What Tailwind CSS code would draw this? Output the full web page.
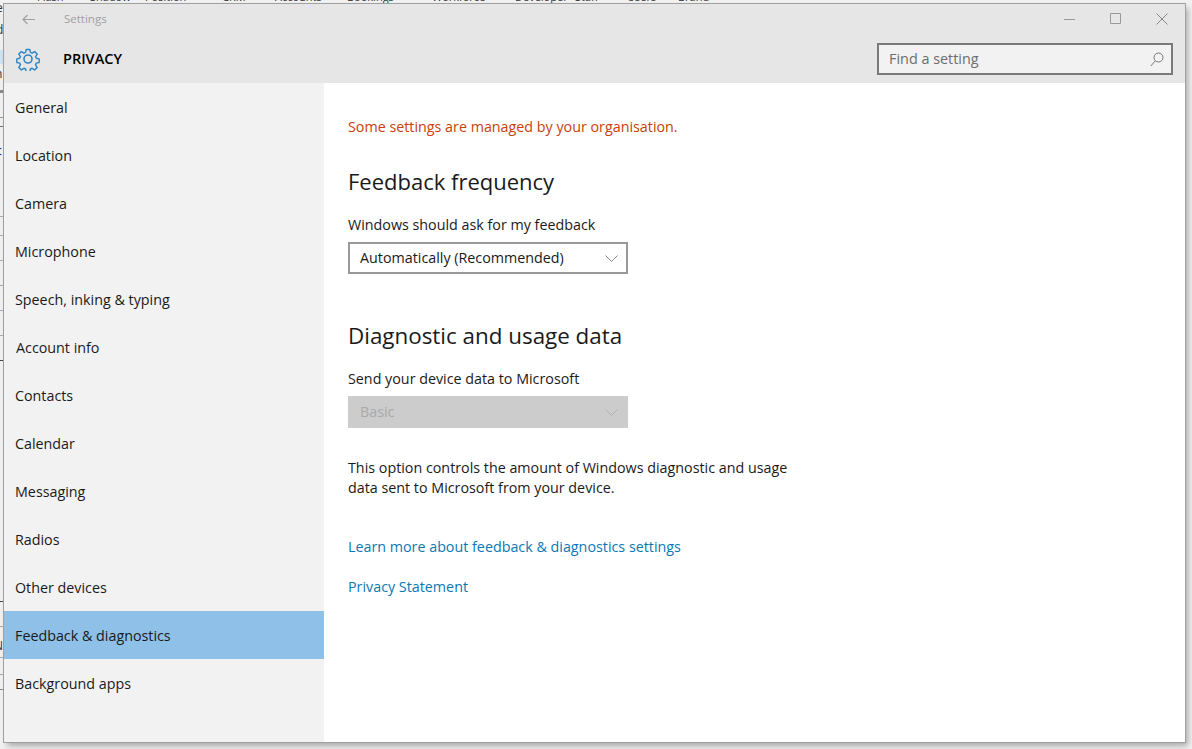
<!doctype html>
<html>
<head>
<meta charset="utf-8">
<title>Settings</title>
<script src="https://cdn.jsdelivr.net/npm/@tailwindcss/browser@4"></script>
</head>
<body class="relative w-[1192px] h-[749px] overflow-hidden bg-[#f1f1f1] font-['Open_Sans','Noto_Sans',sans-serif]">
  <!-- desktop behind the window -->
  <div class="absolute left-0 top-[-11px] w-full flex text-[11px] text-[#333] whitespace-nowrap">
    <span class="ml-[37px] w-[53px]">Flash</span><span class="w-[55px]">Shadow</span><span class="w-[77px]">Position</span><span class="w-[53px]">CRM</span><span class="w-[72px]">Accounts</span><span class="w-[85px]">Bookings</span><span class="w-[83px]">Workforce</span><span class="w-[60px]">Developer</span><span class="w-[52px]">Staff</span><span class="w-[51px]">Users</span><span>Brand</span>
  </div>
  <div class="absolute left-0 top-0 w-[3px] h-[749px] overflow-hidden flex flex-col text-[12px] leading-[14px] text-[#333]">
    <span class="mt-[1px] -ml-[4px]">e</span>
    <span class="mt-[8px] -ml-[4px]">d</span>
    <div class="mt-[13px] h-[14px] bg-[#cfe4f2]"></div>
    <span class="mt-[3px] -ml-[5px]">n</span>
    <div class="mt-[9px] h-[3px] bg-[#8a8a8a]"></div>
    <div class="mt-[24px] h-px bg-[#999]"></div>
    <div class="mt-[8px] h-px bg-[#777]"></div>
    <span class="mt-[17px] -ml-[4px] text-[#22228a]">c</span>
    <div class="mt-[58px] h-px bg-[#aaa]"></div>
    <div class="mt-[18px] h-px bg-[#aaa]"></div>
    <div class="mt-[24px] h-px bg-[#aaa]"></div>
    <div class="mt-[24px] h-px bg-[#aaa]"></div>
    <div class="mt-[24px] h-px bg-[#aaa]"></div>
    <div class="mt-[24px] h-px bg-[#aaa]"></div>
    <div class="mt-[24px] h-px bg-[#444]"></div>
    <div class="mt-[240px] h-px bg-[#444]"></div>
    <div class="mt-[24px] h-px bg-[#aaa]"></div>
    <span class="mt-[12px] -ml-[6px]">N</span>
    <div class="mt-[4px] h-px bg-[#aaa]"></div>
    <div class="mt-[16px] h-px bg-[#aaa]"></div>
    <div class="mt-[14px] h-px bg-[#888]"></div>
  </div>

  <!-- settings window -->
  <div class="absolute left-[4px] top-[4px] w-[1181px] h-[738px] flex flex-col bg-white shadow-[0_0_0_1px_#a0a0a0,3px_4px_6px_rgba(0,0,0,0.3)]">
    <header class="h-[79px] shrink-0 bg-[#e6e6e6] flex flex-col">
      <div class="h-[29px] flex items-center">
        <svg class="ml-[18px] mt-[1px]" width="13" height="11" viewBox="0 0 13 11" fill="none" stroke="#a0a0a0" stroke-width="1.2"><path d="M13 5.5H1M5.5 1 1 5.5 5.5 10"/></svg>
        <span class="ml-[29px] text-[11.5px] text-[#a0a0a0]">Settings</span>
        <div class="ml-auto flex items-center">
          <svg class="mr-[35px]" width="11" height="11" viewBox="0 0 11 11" stroke="#999" fill="none"><path d="M0 6.5H11"/></svg>
          <svg class="mr-[35px]" width="11" height="11" viewBox="0 0 11 11" stroke="#999" fill="none"><path d="M.5.5h10v10H.5z"/></svg>
          <svg class="mr-[17px]" width="12" height="12" viewBox="0 0 12 12" stroke="#888" fill="none"><path d="M.5.5l11 11M11.5.5l-11 11"/></svg>
        </div>
      </div>
      <div class="h-[50px] flex items-center">
        <svg class="ml-[12px] mt-[2px]" width="24" height="24" viewBox="0 0 24 24" fill="none" stroke="#2f86c5" stroke-width="1.6" stroke-linejoin="round">
          <circle cx="12" cy="12" r="4"/>
          <path d="M10 1.5h4l.7 3.2 1.9.8 2.8-1.8 2.8 2.8-1.8 2.8.8 1.9 3.2.7v4l-3.2.7-.8 1.9 1.8 2.8-2.8 2.8-2.8-1.8-1.9.8-.7 3.2h-4l-.7-3.2-1.9-.8-2.8 1.8-2.8-2.8 1.8-2.8-.8-1.9-3.2-.7v-4l3.2-.7.8-1.9-1.8-2.8 2.8-2.8 2.8 1.8 1.9-.8z" transform="translate(1.2 1.2) scale(.9)"/>
        </svg>
        <h1 class="ml-[23px] mt-[2px] text-[14.5px] font-semibold text-black">PRIVACY</h1>
        <div class="ml-auto mr-[12px] mt-[2px] w-[296px] h-[32px] border-2 border-[#7a7a7a] bg-[#f2f2f2] flex items-center pl-[10px] pr-[7px] text-[14.4px] text-[#6d6d6d]">
          <span>Find a setting</span>
          <svg class="ml-auto" width="14" height="15" viewBox="0 0 14 15" fill="none" stroke="#777"><circle cx="8.5" cy="5.5" r="4.5"/><path d="M5.2 9 .8 14"/></svg>
        </div>
      </div>
    </header>

    <div class="flex flex-1 min-h-0">
      <nav class="w-[320px] shrink-0 bg-[#f2f2f2] text-[14.3px] text-[#1a1a1a]">
        <div class="h-[48px] flex items-center pt-[2px] pl-[11px]">General</div>
        <div class="h-[48px] flex items-center pt-[2px] pl-[11px]">Location</div>
        <div class="h-[48px] flex items-center pt-[2px] pl-[11px]">Camera</div>
        <div class="h-[48px] flex items-center pt-[2px] pl-[11px]">Microphone</div>
        <div class="h-[48px] flex items-center pt-[2px] pl-[11px]">Speech, inking &amp; typing</div>
        <div class="h-[48px] flex items-center pt-[2px] pl-[12px]">Account info</div>
        <div class="h-[48px] flex items-center pt-[2px] pl-[11px]">Contacts</div>
        <div class="h-[48px] flex items-center pt-[2px] pl-[11px]">Calendar</div>
        <div class="h-[48px] flex items-center pt-[2px] pl-[11px]">Messaging</div>
        <div class="h-[48px] flex items-center pt-[2px] pl-[11px]">Radios</div>
        <div class="h-[48px] flex items-center pt-[2px] pl-[11px]">Other devices</div>
        <div class="h-[48px] flex items-center pt-[2px] pl-[11px] bg-[#8fc0e8]">Feedback &amp; diagnostics</div>
        <div class="h-[48px] flex items-center pt-[2px] pl-[11px]">Background apps</div>
      </nav>

      <main class="flex-1 pl-[24px] pt-[34px] text-[14.3px] text-[#1a1a1a]">
        <p class="h-[20px] leading-[20px] text-[#c8400a]">Some settings are managed by your organisation.</p>
        <h2 class="mt-[28px] h-[32px] leading-[32px] text-[22px] text-[#1a1a1a]">Feedback frequency</h2>
        <p class="mt-[18px] h-[20px] leading-[20px]">Windows should ask for my feedback</p>
        <div class="mt-[7px] w-[280px] h-[32px] border-2 border-[#999] flex items-center pl-[10px] pr-[8px]">
          <span>Automatically (Recommended)</span>
          <svg class="ml-auto" width="13" height="7" viewBox="0 0 13 7" fill="none" stroke="#888"><path d="M.5.5 6.5 6.5l6-6"/></svg>
        </div>
        <h2 class="mt-[46px] h-[32px] leading-[32px] text-[22.4px]">Diagnostic and usage data</h2>
        <p class="mt-[17px] h-[20px] leading-[20px]">Send your device data to Microsoft</p>
        <div class="mt-[7px] w-[280px] h-[32px] bg-[#cccccc] flex items-center pl-[12px] pr-[10px] text-[#a9a9a9]">
          <span>Basic</span>
          <svg class="ml-auto" width="13" height="7" viewBox="0 0 13 7" fill="none" stroke="#b0b0b0"><path d="M.5.5 6.5 6.5l6-6"/></svg>
        </div>
        <p class="mt-[30px] w-[460px] leading-[20px]">This option controls the amount of Windows diagnostic and usage data sent to Microsoft from your device.</p>
        <a class="block mt-[39px] h-[20px] leading-[20px] text-[#0a78b4]" href="#">Learn more about feedback &amp; diagnostics settings</a>
        <a class="block mt-[20px] h-[20px] leading-[20px] text-[#0a78b4]" href="#">Privacy Statement</a>
      </main>
    </div>
  </div>
</body>
</html>
